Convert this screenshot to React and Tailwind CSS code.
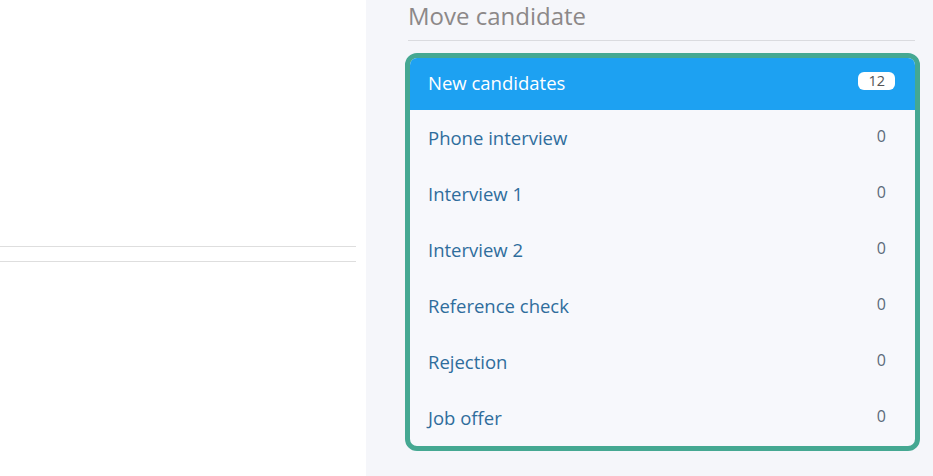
import React from 'react';

const stages = [
  { name: 'Phone interview', count: 0 },
  { name: 'Interview 1', count: 0 },
  { name: 'Interview 2', count: 0 },
  { name: 'Reference check', count: 0 },
  { name: 'Rejection', count: 0 },
  { name: 'Job offer', count: 0 },
];

export default function App() {
  return (
    <div className="flex h-[476px] w-[933px] overflow-hidden bg-white font-['Open_Sans',sans-serif]">
      {/* left side, mostly empty */}
      <div className="w-[366px] shrink-0 pr-[10px] pt-[246px]">
        <div className="h-px bg-[#dedede]" />
        <div className="mt-[14px] h-px bg-[#dedede]" />
      </div>

      {/* move candidate panel */}
      <div className="flex-1 bg-[#f5f6fa] pl-[42px] pr-[18px]">
        <div className="border-b border-[#dadbdf] pb-[8px]">
          <h2 className="text-[24px] leading-[32px] text-[#8c8888]">Move candidate</h2>
        </div>

        <div className="-ml-[3px] -mr-[5px] mt-[12px] overflow-hidden rounded-[12px] border-[5px] border-[#45a892] bg-[#f7f8fc]">
          <div className="flex h-[52px] items-center justify-between bg-[#1da1f2] pl-[18px] pr-[20px]">
            <span className="-mt-[2px] text-[18.5px] text-white">New candidates</span>
            <span className="-mt-[6px] flex h-[18px] items-center rounded-[6px] bg-white px-[10px] text-[14.5px] text-[#555]">12</span>
          </div>
          {stages.map((s) => (
            <div key={s.name} className="flex h-[56px] items-center justify-between pl-[18px] pr-[29px]">
              <span className="text-[18.5px] text-[#2f6d9c]">{s.name}</span>
              <span className="-mt-[4px] text-[16px] text-[#5b6a7a]">{s.count}</span>
            </div>
          ))}
        </div>
      </div>
    </div>
  );
}
